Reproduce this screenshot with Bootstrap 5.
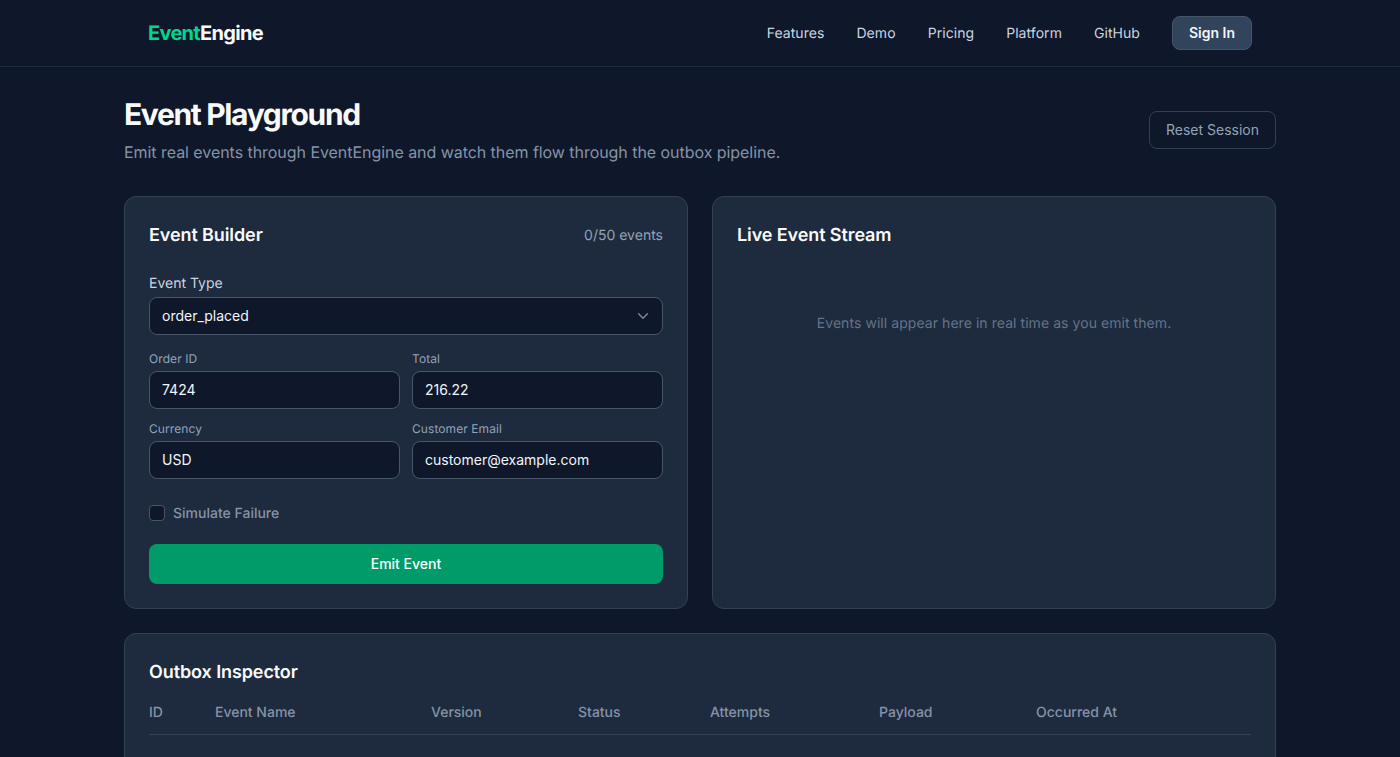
<!DOCTYPE html>
<html lang="en">
<head>
  <meta charset="UTF-8">
  <title>Event Playground - EventEngine</title>
  <link href="https://cdn.jsdelivr.net/npm/bootstrap@5.3.0/dist/css/bootstrap.min.css" rel="stylesheet">
  <style>
    body {
      background-color: #0f172a;
      color: #e2e8f0;
      font-family: "Inter", "Liberation Sans", sans-serif;
      font-size: 14px;
      text-rendering: geometricPrecision;
    }
    .site-nav {
      height: 67px;
      border-bottom: 1px solid #1e2a3d;
    }
    .nav-inner, .page-wrap {
      width: 1152px;
      margin: 0 auto;
    }
    .nav-inner { padding: 0 24px; height: 66px; }
    .nav-links { gap: 32px; }
    .brand { font-size: 20px; font-weight: 700; letter-spacing: -0.7px; color: #f8fafc; text-decoration: none; }
    .brand span { color: #00d68f; }
    .top-link { color: #cbd5e1; text-decoration: none; font-size: 14px; letter-spacing: 0.06px; }
    .btn-signin {
      width: 80px; height: 34px; padding: 0 0 2px;
      background: #32435c; border: 1px solid #475569; border-radius: 8px;
      color: #f1f5f9; font-size: 14px; font-weight: 600;
    }
    .page-head { padding-top: 29px; margin-bottom: 32px; }
    .page-title { font-size: 30px; font-weight: 700; letter-spacing: -1.35px; line-height: 36px; padding-top: 1px; color: #f8fafc; margin: 0 0 7px; }
    .page-sub { font-size: 16px; line-height: 24px; letter-spacing: -0.05px; color: #8593a8; margin: 0; }
    .btn-reset {
      height: 38px; padding: 0 16px 2px;
      background: transparent; border: 1px solid #334155; border-radius: 8px;
      color: #94a3b8; font-size: 14px;
    }
    .panel {
      background: #1e2a3d;
      border: 1px solid #334155;
      border-radius: 12px;
      padding: 24px;
    }
    .panel-top { height: 413px; }
    .panel-title { font-size: 18px; font-weight: 600; line-height: 28px; letter-spacing: -0.1px; padding-top: 1px; color: #f8fafc; margin: 0; }
    .builder-head { margin-bottom: 24px; }
    .event-count { font-size: 14px; color: #94a3b8; }
    .field-main { display: block; font-size: 14px; line-height: 20px; color: #cbd5e1; margin-bottom: 3px; }
    .field-small { display: block; font-size: 12px; line-height: 16px; letter-spacing: 0.08px; color: #94a3b8; margin-bottom: 4px; }
    .field-input.form-control, .field-input.form-select {
      height: 38px;
      padding: 0 12px 2px;
      background-color: #0f172a;
      border: 1px solid #475569;
      border-radius: 8px;
      color: #f1f5f9;
      font-size: 14px;
    }
    .field-input.form-select {
      background-image: url("data:image/svg+xml,%3csvg xmlns='http://www.w3.org/2000/svg' viewBox='0 0 16 16'%3e%3cpath fill='none' stroke='%237f8da3' stroke-linecap='round' stroke-linejoin='round' stroke-width='1.5' d='m3 5.5 5 5 5-5'/%3e%3c/svg%3e");
      background-position: right 12px center;
      background-size: 14px 14px;
    }
    .field-grid { row-gap: 12px; margin-bottom: 24px; }
    .field-left { padding-right: 6px; }
    .field-right { padding-left: 6px; }
    .fail-row { height: 20px; margin-bottom: 21px; }
    .fail-check.form-check-input {
      width: 16px; height: 16px; margin: 0;
      background-color: #0f172a;
      border: 1px solid #475569;
      border-radius: 4px;
    }
    .fail-label { font-size: 14px; font-weight: 500; color: #8593a8; }
    .btn-emit {
      height: 40px; padding: 0 0 2px;
      background: #009b68; border: 0; border-radius: 8px;
      color: #fff; font-size: 14px; font-weight: 500;
    }
    .stream-empty { font-size: 14px; line-height: 20px; letter-spacing: 0.06px; color: #64748b; padding-top: 64px; }
    .outbox-table { width: 100%; border-collapse: collapse; table-layout: fixed; margin-top: 15px; }
    .outbox-table th {
      padding: 0 0 10px;
      height: 32px;
      font-size: 14px; font-weight: 500; color: #8593a8;
      border-bottom: 1px solid #334155;
    }
    .outbox-table td { height: 64px; }
    .w-id { width: 66px; } .w-name { width: 216px; } .w-ver { width: 147px; }
    .w-status { width: 132px; } .w-att { width: 169px; } .w-pay { width: 157px; }
  </style>
</head>
<body>
  <nav class="site-nav">
    <div class="nav-inner d-flex align-items-center justify-content-between">
      <a class="brand" href="#"><span>Event</span>Engine</a>
      <div class="nav-links d-flex align-items-center">
        <a class="top-link" href="#">Features</a>
        <a class="top-link" href="#">Demo</a>
        <a class="top-link" href="#">Pricing</a>
        <a class="top-link" href="#">Platform</a>
        <a class="top-link" href="#">GitHub</a>
        <button class="btn btn-signin" type="button">Sign In</button>
      </div>
    </div>
  </nav>

  <main class="page-wrap">
    <div class="page-head d-flex align-items-center justify-content-between">
      <div>
        <h1 class="page-title">Event Playground</h1>
        <p class="page-sub">Emit real events through EventEngine and watch them flow through the outbox pipeline.</p>
      </div>
      <button class="btn btn-reset" type="button">Reset Session</button>
    </div>

    <div class="d-flex gap-4 mb-4">
      <section class="panel panel-top flex-fill w-50">
        <div class="builder-head d-flex align-items-center justify-content-between">
          <h2 class="panel-title">Event Builder</h2>
          <span class="event-count">0/50 events</span>
        </div>
        <form>
          <label class="field-main" for="eventType">Event Type</label>
          <select class="form-select field-input mb-3" id="eventType">
            <option>order_placed</option>
          </select>
          <div class="row gx-0 field-grid">
            <div class="col-6 field-left">
              <label class="field-small" for="orderId">Order ID</label>
              <input class="form-control field-input" id="orderId" value="7424">
            </div>
            <div class="col-6 field-right">
              <label class="field-small" for="total">Total</label>
              <input class="form-control field-input" id="total" value="216.22">
            </div>
            <div class="col-6 field-left">
              <label class="field-small" for="currency">Currency</label>
              <input class="form-control field-input" id="currency" value="USD">
            </div>
            <div class="col-6 field-right">
              <label class="field-small" for="email">Customer Email</label>
              <input class="form-control field-input" id="email" value="customer@example.com">
            </div>
          </div>
          <div class="d-flex align-items-center gap-2 fail-row">
            <input class="form-check-input fail-check" type="checkbox" id="simFail">
            <label class="fail-label" for="simFail">Simulate Failure</label>
          </div>
          <button class="btn btn-emit w-100" type="button">Emit Event</button>
        </form>
      </section>

      <section class="panel panel-top flex-fill w-50">
        <h2 class="panel-title">Live Event Stream</h2>
        <p class="stream-empty text-center mb-0">Events will appear here in real time as you emit them.</p>
      </section>
    </div>

    <section class="panel">
      <h2 class="panel-title">Outbox Inspector</h2>
      <table class="outbox-table">
        <thead>
          <tr>
            <th class="w-id">ID</th>
            <th class="w-name">Event Name</th>
            <th class="w-ver">Version</th>
            <th class="w-status">Status</th>
            <th class="w-att">Attempts</th>
            <th class="w-pay">Payload</th>
            <th>Occurred At</th>
          </tr>
        </thead>
        <tbody>
          <tr><td colspan="7"></td></tr>
        </tbody>
      </table>
    </section>
  </main>

  <script src="https://cdn.jsdelivr.net/npm/bootstrap@5.3.0/dist/js/bootstrap.bundle.min.js"></script>
</body>
</html>
